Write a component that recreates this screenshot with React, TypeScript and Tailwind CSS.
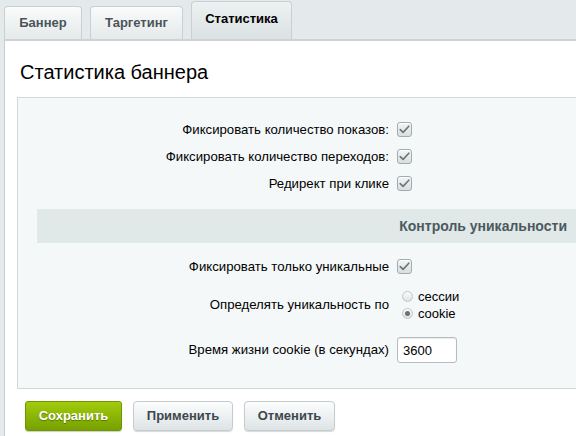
import React from 'react';

const CheckBox: React.FC = () => (
  <span className="flex h-[15px] w-[15px] items-center justify-center rounded-[3px] border border-[#a3abae] bg-gradient-to-b from-[#f3f5f5] to-[#d9dedf] shadow-[inset_0_1px_0_#fff]">
    <svg width="11" height="9" viewBox="0 0 11 9" fill="none">
      <path d="M1.2 4.6 L4.1 7.4 L9.8 1.2" stroke="#6b7578" strokeWidth="1.6" strokeLinecap="round" strokeLinejoin="round" />
    </svg>
  </span>
);

const Radio: React.FC<{ checked?: boolean; label: string }> = ({ checked, label }) => (
  <div className="flex h-[17px] items-center">
    <span className="mr-[5px] flex h-[11px] w-[11px] items-center justify-center rounded-full border border-[#bfc5c7] bg-gradient-to-b from-[#fbfcfc] to-[#dfe3e4]">
      {checked && <span className="h-[5px] w-[5px] rounded-full bg-[#6a7173]" />}
    </span>
    <span>{label}</span>
  </div>
);

const Row: React.FC<{ label: string; children: React.ReactNode; className?: string }> = ({ label, children, className }) => (
  <div className={`flex items-center ${className ?? 'h-[27px]'}`}>
    <div className="w-[371px] shrink-0 text-right text-[13.2px]">{label}</div>
    <div className="pl-[8px]">{children}</div>
  </div>
);

const App: React.FC = () => {
  const tabs = [
    { name: 'Баннер', width: 'w-[78px]' },
    { name: 'Таргетинг', width: 'w-[93px]' },
  ];

  return (
    <div className="h-[436px] w-[576px] overflow-hidden bg-[#e4eaeb] font-['Liberation_Sans',Arial,sans-serif] text-[13px] text-black">
      <div className="flex h-[39px] items-end gap-[8px] pl-[4px]">
        {tabs.map((tab) => (
          <div
            key={tab.name}
            className={`${tab.width} flex h-[33px] items-center justify-center rounded-t-[4px] border border-b-0 border-[#c9d0d2] bg-gradient-to-b from-[#fafbfb] to-[#e4e9ea] font-bold text-[#4b5459]`}
          >
            {tab.name}
          </div>
        ))}
        <div className="flex h-[38px] w-[101px] items-center justify-center rounded-t-[4px] border border-b-0 border-[#c9d0d2] bg-gradient-to-b from-[#edf1f1] to-[#dbe2e3] pb-[4px] font-bold">
          Статистика
        </div>
      </div>

      <div className="ml-[4px] h-full border-l border-t-2 border-[#c7cecf] border-t-[#cdd3d4] bg-white">
        <h1 className="pl-[15px] pt-[18px] text-[20px] leading-[26px] text-black">Статистика баннера</h1>

        <div className="ml-[12px] mt-[12px] border border-r-0 border-[#d3d9da] bg-[#f5f8f8] pb-[18px] pt-[18px]">
          <Row label="Фиксировать количество показов:">
            <CheckBox />
          </Row>
          <Row label="Фиксировать количество переходов:">
            <CheckBox />
          </Row>
          <Row label="Редирект при клике">
            <CheckBox />
          </Row>

          <div className="ml-[19px] mt-[12px] flex h-[34px] items-center justify-end bg-[#e0e8e8] pr-[9px] text-[14px] font-bold text-[#4b5a5f]">
            Контроль уникальности
          </div>

          <Row label="Фиксировать только уникальные" className="mt-[10px] h-[27px]">
            <CheckBox />
          </Row>
          <Row label="Определять уникальность по" className="h-[50px]">
            <div className="pl-[5px]">
              <Radio label="сессии" />
              <Radio checked label="cookie" />
            </div>
          </Row>
          <Row label="Время жизни cookie (в секундах)" className="h-[40px]">
            <input
              readOnly
              value="3600"
              className="h-[26px] w-[60px] rounded-[3px] border border-[#b4bec1] bg-white pl-[5px] text-[13px] text-black shadow-[inset_0_1px_1px_rgba(0,0,0,0.08)] outline-none"
            />
          </Row>
        </div>

        <div className="ml-[20px] mt-[12px] flex gap-[11px]">
          <button className="h-[30px] w-[97px] rounded-[3px] border border-[#6f9500] bg-gradient-to-b from-[#a2cb0c] to-[#76a100] font-bold text-white shadow-[0_1px_1px_rgba(0,0,0,0.2)] [text-shadow:0_1px_1px_rgba(0,0,0,0.35)]">
            Сохранить
          </button>
          <button className="h-[30px] w-[100px] rounded-[4px] border border-[#c4ccce] bg-gradient-to-b from-[#fcfdfd] to-[#dde4e6] font-bold text-[#3d474d] shadow-[0_1px_1px_rgba(0,0,0,0.15)]">
            Применить
          </button>
          <button className="h-[30px] w-[91px] rounded-[4px] border border-[#c4ccce] bg-gradient-to-b from-[#fcfdfd] to-[#dde4e6] font-bold text-[#3d474d] shadow-[0_1px_1px_rgba(0,0,0,0.15)]">
            Отменить
          </button>
        </div>
      </div>
    </div>
  );
};

export default App;
